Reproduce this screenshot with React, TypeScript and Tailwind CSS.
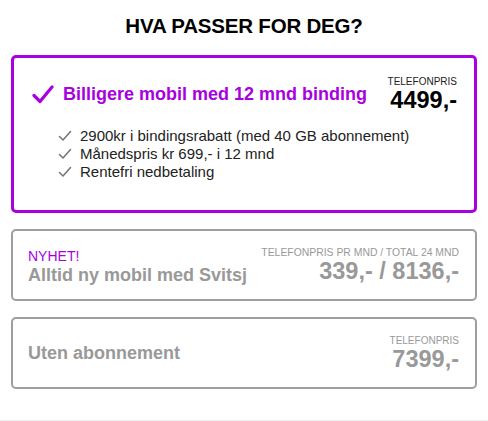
import React from "react";

const PURPLE = "text-[#a800e0]";

function BigCheck() {
  return (
    <svg width="22" height="19" viewBox="0 0 22 19" className="shrink-0">
      <path d="M2 10.5 L8 16.5 L20 2" fill="none" stroke="#a800e0" strokeWidth="3.2" strokeLinecap="round" strokeLinejoin="round" />
    </svg>
  );
}

function SmallCheck() {
  return (
    <svg width="14" height="12" viewBox="0 0 14 12" className="shrink-0">
      <path d="M1.5 6.5 L5 10 L12.5 1.5" fill="none" stroke="#777" strokeWidth="1.6" strokeLinecap="round" strokeLinejoin="round" />
    </svg>
  );
}

const fordeler = [
  "2900kr i bindingsrabatt (med 40 GB abonnement)",
  "Månedspris kr 699,- i 12 mnd",
  "Rentefri nedbetaling",
];

export default function App() {
  return (
    <div className="w-[488px] h-[421px] bg-white font-['Liberation_Sans',Arial,sans-serif] border-b border-[#eeeeee] overflow-hidden">
      <h1 className="text-center text-[20.5px] font-bold text-black leading-[24px] pt-[14px] tracking-[-0.2px]">
        HVA PASSER FOR DEG?
      </h1>

      <div className="px-[11px] mt-[17px] flex flex-col gap-[16px]">
        {/* valgt alternativ */}
        <div className="h-[158px] border-[3px] border-[#a800e0] rounded-[5px] pl-[18px] pr-[17px] pt-[15px]">
          <div className="flex items-start justify-between">
            <div className="flex items-center gap-[9px] mt-[10px]">
              <BigCheck />
              <span className={`${PURPLE} text-[18px] font-bold leading-[22px]`}>
                Billigere mobil med 12 mnd binding
              </span>
            </div>
            <div className="text-right mt-[3px]">
              <div className="text-[10px] leading-[12px] text-[#222]">TELEFONPRIS</div>
              <div className="text-[23.5px] font-bold leading-[24px] text-black">4499,-</div>
            </div>
          </div>
          <ul className="mt-[15px] pl-[26px] flex flex-col">
            {fordeler.map((f, i) => (
              <li key={i} className="flex items-center gap-[8px] text-[15px] leading-[18px] text-[#222]">
                <SmallCheck />
                <span>{f}</span>
              </li>
            ))}
          </ul>
        </div>

        {/* Svitsj */}
        <div className="h-[72px] border-2 border-[#9e9e9e] rounded-[5px] pl-[15px] pr-[16px] flex items-center justify-between">
          <div className="mt-[4px]">
            <div className={`${PURPLE} text-[14px] leading-[16px]`}>NYHET!</div>
            <div className="text-[18px] font-bold leading-[22px] text-[#999]">Alltid ny mobil med Svitsj</div>
          </div>
          <div className="text-right">
            <div className="text-[10.4px] leading-[12px] text-[#999]">TELEFONPRIS PR MND / TOTAL 24 MND</div>
            <div className="text-[23.5px] font-bold leading-[25px] text-[#999]">339,- / 8136,-</div>
          </div>
        </div>

        {/* uten abonnement */}
        <div className="h-[72px] border-2 border-[#9e9e9e] rounded-[5px] pl-[15px] pr-[16px] flex items-center justify-between">
          <div className="text-[18px] font-bold leading-[22px] text-[#999]">Uten abonnement</div>
          <div className="text-right">
            <div className="text-[10px] leading-[12px] text-[#999]">TELEFONPRIS</div>
            <div className="text-[23.5px] font-bold leading-[25px] text-[#999]">7399,-</div>
          </div>
        </div>
      </div>
    </div>
  );
}
